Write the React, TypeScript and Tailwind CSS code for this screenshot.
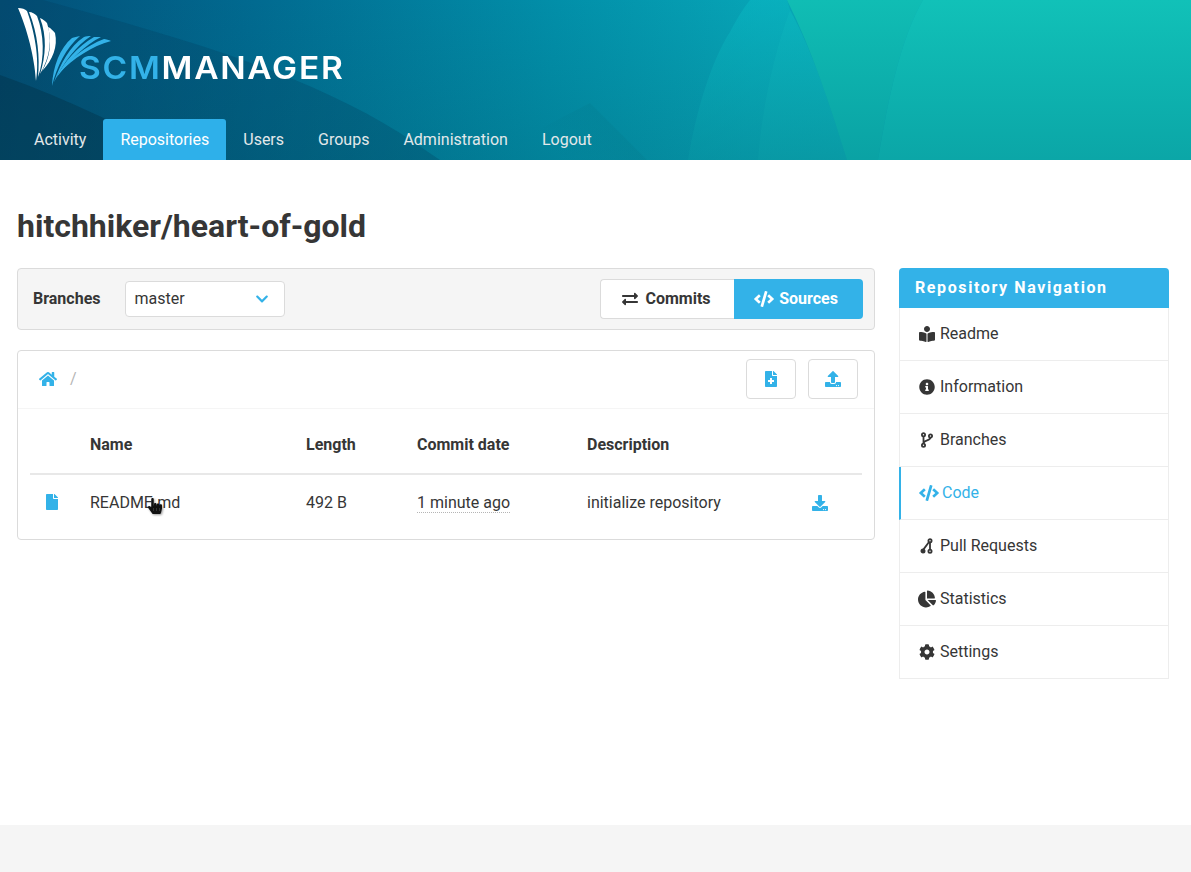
import { ReactNode } from "react";
import {
  FaBookReader,
  FaChartPie,
  FaChevronDown,
  FaCode,
  FaCog,
  FaDownload,
  FaExchangeAlt,
  FaFile,
  FaFileMedical,
  FaHandPointer,
  FaHome,
  FaInfoCircle,
  FaUpload,
} from "react-icons/fa";

function HeaderArt() {
  return (
    <svg className="absolute inset-0 h-full w-full" viewBox="0 0 1191 160" preserveAspectRatio="none">
      <defs>
        <linearGradient id="hero" x1="0" y1="0" x2="1000" y2="130" gradientUnits="userSpaceOnUse">
          <stop offset="0" stopColor="#034f78" />
          <stop offset="0.25" stopColor="#016a90" />
          <stop offset="0.55" stopColor="#028fa9" />
          <stop offset="0.75" stopColor="#07a4b6" />
          <stop offset="1" stopColor="#0ab4b4" />
        </linearGradient>
        <linearGradient id="shade" x1="0" y1="0" x2="0" y2="160" gradientUnits="userSpaceOnUse">
          <stop offset="0" stopColor="#03505f" stopOpacity="0" />
          <stop offset="1" stopColor="#03505f" stopOpacity="0.22" />
        </linearGradient>
        <linearGradient id="corner" x1="618" y1="131" x2="576" y2="173" gradientUnits="userSpaceOnUse">
          <stop offset="0" stopColor="#04606f" stopOpacity="0.1" />
          <stop offset="1" stopColor="#04606f" stopOpacity="0" />
        </linearGradient>
        <linearGradient id="archA" x1="0" y1="0" x2="0" y2="160" gradientUnits="userSpaceOnUse">
          <stop offset="0" stopColor="#0abcc6" />
          <stop offset="1" stopColor="#0898a4" />
        </linearGradient>
        <linearGradient id="archB" x1="0" y1="0" x2="0" y2="160" gradientUnits="userSpaceOnUse">
          <stop offset="0" stopColor="#0cbcc4" />
          <stop offset="1" stopColor="#0a9ca6" />
        </linearGradient>
        <linearGradient id="archC" x1="0" y1="0" x2="0" y2="160" gradientUnits="userSpaceOnUse">
          <stop offset="0" stopColor="#10bdb4" />
          <stop offset="1" stopColor="#0aa2a4" />
        </linearGradient>
        <linearGradient id="archD" x1="0" y1="0" x2="0" y2="160" gradientUnits="userSpaceOnUse">
          <stop offset="0" stopColor="#11c1b8" />
          <stop offset="1" stopColor="#0ba6a7" />
        </linearGradient>
      </defs>
      <rect width="1191" height="160" fill="url(#hero)" />
      <path d="M43 0C170 35 300 70 400 133L440 160H0V0Z" fill="#03405f" opacity="0.3" />
      <path d="M0 75C70 100 130 130 190 160H0Z" fill="#032f48" opacity="0.45" />
      <path d="M590 103L647 160H480Z" fill="url(#corner)" />
      <rect width="1191" height="160" fill="url(#shade)" />
      <path d="M688 160C698 100 715 55 730 32C735 22 742 10 750 0H787L790 10C775 50 762 105 758 160Z" fill="url(#archA)" opacity="0.45" />
      <path d="M758 160C762 105 775 50 790 10C812 50 830 105 847 160Z" fill="url(#archB)" opacity="0.65" />
      <path d="M787 0H923C900 40 888 100 878 160H847C830 105 812 50 787 0Z" fill="url(#archC)" />
      <path d="M878 160C888 100 900 40 923 0H1191V160Z" fill="url(#archD)" />
    </svg>
  );
}

function Logo() {
  return (
    <div className="relative z-10 ml-[-17px] flex h-[119px] items-start">
      <svg width="112" height="90" viewBox="0 0 112 90" className="mt-[6px] shrink-0">
        <g transform="translate(0,-6)" fill="#ffffff">
          <path d="M18 8C22 8 25 9 27 11C34 30 40 58 36 81C35 64 30 36 18 8Z" />
          <path d="M29 12C32 12 35 14 37 16C44 34 45 58 38 77C40 58 38 34 29 12Z" />
          <path d="M40 18C43 19 45 21 47 23C52 38 51 56 40 74C46 56 47 36 40 18Z" />
          <path d="M48 27C51 28 53 31 55 33C58 46 53 60 42 71C50 58 52 42 48 27Z" />
        </g>
        <g transform="translate(0,-6)" fill="#33b2e8">
          <path d="M52 86C53 66 60 48 72 38C74 37 77 37 80 36C66 48 57 66 52 86Z" />
          <path d="M54 82C60 64 70 46 84 37C86 36 88 36 91 36C76 46 64 62 54 82Z" />
          <path d="M56 78C64 62 78 46 94 37C96 37 99 37 101 37C85 45 70 60 56 78Z" />
          <path d="M58 74C70 58 86 46 104 39C106 39 109 40 111 41C92 46 74 58 58 74Z" />
        </g>
      </svg>
      <div className="mt-[50px] ml-[-33px] origin-left scale-x-[1.08] font-['Inter',sans-serif] text-[31px] leading-[36px] font-semibold tracking-[1.6px] whitespace-nowrap">
        <span className="text-[#33b2e8]">SCM</span>
        <span className="text-white">MANAGER</span>
      </div>
    </div>
  );
}

const topLinks = ["Activity", "Repositories", "Users", "Groups", "Administration", "Logout"];

const sideLinks: { label: string; icon: ReactNode; active?: boolean }[] = [
  { label: "Readme", icon: <FaBookReader size={16} /> },
  { label: "Information", icon: <FaInfoCircle size={16} /> },
  { label: "Branches", icon: <BranchIcon /> },
  { label: "Code", icon: <FaCode size={20} className="shrink-0" />, active: true },
  { label: "Pull Requests", icon: <PullIcon /> },
  { label: "Statistics", icon: <FaChartPie size={18} className="shrink-0" /> },
  { label: "Settings", icon: <FaCog size={16} /> },
];

function BranchIcon() {
  return (
    <svg width="16" height="16" viewBox="0 0 16 16" fill="none" stroke="currentColor" strokeWidth="1.8">
      <circle cx="4.5" cy="2.8" r="1.6" />
      <circle cx="4.5" cy="13.2" r="1.6" />
      <circle cx="11.5" cy="4" r="1.6" />
      <path d="M4.5 4.4V11.6M11.5 5.6C11.5 9 5 7.5 4.5 11" />
    </svg>
  );
}

function PullIcon() {
  return (
    <svg width="16" height="16" viewBox="0 0 16 16" fill="none" stroke="currentColor" strokeWidth="1.8">
      <circle cx="11" cy="2.8" r="1.6" />
      <circle cx="11" cy="13.2" r="1.6" />
      <circle cx="4" cy="13" r="1.6" fill="currentColor" />
      <path d="M11 4.4V11.6M10 4L4.5 11.4" />
    </svg>
  );
}

export default function App() {
  return (
    <div className="flex min-h-screen flex-col bg-white font-['Roboto',sans-serif] text-[16px] text-[#363636]">
      <header className="relative h-[160px] overflow-hidden pl-[17px]">
        <HeaderArt />
        <Logo />
        <nav className="relative z-10 flex h-[41px]">
          {topLinks.map(link => (
            <a
              key={link}
              className={`flex items-center rounded-t-[3px] px-[17px] ${
                link === "Repositories" ? "bg-[#2eb0ea] text-white" : "text-[#e2e8ea]"
              }`}
            >
              {link}
            </a>
          ))}
        </nav>
      </header>

      <main className="flex-1 px-[17px] pt-[47px]">
        <h1 className="text-[32px] leading-[38px] font-bold text-[#363636]">hitchhiker/heart-of-gold</h1>
        <div className="mt-[23px] mr-[5px] flex gap-[24px]">
          <div className="w-[858px]">
            <div className="flex h-[62px] items-center rounded-[4px] border border-[#dbdbdb] bg-[#f5f5f5] pr-[11px] pl-[15px]">
              <span className="font-bold">Branches</span>
              <div className="ml-[24px] flex h-[36px] w-[160px] items-center justify-between rounded-[4px] border border-[#dbdbdb] bg-white pr-[15px] pl-[9px]">
                <span>master</span>
                <FaChevronDown size={14} className="text-[#33b2e8]" />
              </div>
              <div className="ml-auto flex h-[40px] font-bold">
                <div className="flex w-[134px] items-center justify-center gap-[7px] rounded-l-[4px] border border-r-0 border-[#dbdbdb] bg-white pr-[2px]">
                  <FaExchangeAlt size={16} />
                  Commits
                </div>
                <div className="flex w-[129px] items-center justify-center gap-[5px] rounded-r-[4px] bg-[#33b2e8] pr-[5px] text-white">
                  <FaCode size={20} />
                  Sources
                </div>
              </div>
            </div>

            <div className="mt-[20px] rounded-[4px] border border-[#dbdbdb] pb-[8px]">
              <div className="flex h-[58px] items-center border-b border-[#f5f5f5] pr-[16px] pb-[1px] pl-[21px]">
                <FaHome size={18} className="text-[#33b2e8]" />
                <span className="ml-[13px] text-[#b5b5b5]">/</span>
                <div className="ml-auto flex gap-[12px]">
                  <div className="flex h-[40px] w-[50px] items-center justify-center rounded-[4px] border border-[#dbdbdb]">
                    <FaFileMedical size={16} className="text-[#33b2e8]" />
                  </div>
                  <div className="flex h-[40px] w-[50px] items-center justify-center rounded-[4px] border border-[#dbdbdb]">
                    <FaUpload size={16} className="text-[#33b2e8]" />
                  </div>
                </div>
              </div>
              <div className="px-[12px]">
                <table className="w-full table-fixed">
                  <thead>
                    <tr className="h-[65px] border-b-2 border-[#e8e8e8] text-left">
                      <th className="w-[60px]" />
                      <th className="w-[216px] pt-[8px] font-bold">Name</th>
                      <th className="w-[111px] pt-[8px] font-bold">Length</th>
                      <th className="w-[170px] pt-[8px] font-bold">Commit date</th>
                      <th className="w-[225px] pt-[8px] font-bold">Description</th>
                      <th />
                    </tr>
                  </thead>
                  <tbody>
                    <tr className="h-[57px]">
                      <td className="pb-[2px] pl-[14px]">
                        <FaFile size={16} className="text-[#33b2e8]" />
                      </td>
                      <td>
                        <span className="relative">
                          README.md
                          <FaHandPointer size={16} className="absolute top-[5px] left-[57px] text-[#111] drop-shadow-[1px_1px_1px_rgba(0,0,0,0.4)]" />
                        </span>
                      </td>
                      <td>492 B</td>
                      <td>
                        <span className="border-b border-dotted border-[#b5b5b5]">1 minute ago</span>
                      </td>
                      <td>initialize repository</td>
                      <td className="pb-[1px]">
                        <FaDownload size={16} className="text-[#33b2e8]" />
                      </td>
                    </tr>
                  </tbody>
                </table>
              </div>
            </div>
          </div>

          <aside className="w-[270px]">
            <div className="flex h-[40px] items-center rounded-t-[4px] bg-[#33b2e8] pl-[16px] text-[16px] font-bold tracking-[1.6px] text-white">
              Repository Navigation
            </div>
            <ul className="border-x border-[#ededed]">
              {sideLinks.map(item => (
                <li
                  key={item.label}
                  className={`flex h-[53px] items-center gap-[5px] border-b border-[#ededed] pl-[18px] ${
                    item.active ? "ml-[-1px] border-l-2 border-l-[#33b2e8] text-[#33b2e8]" : ""
                  }`}
                >
                  <span className={`flex justify-center ${item.active ? "w-[20px]" : "w-[17px]"}`}>{item.icon}</span>
                  <span className={item.active ? "ml-[-2px]" : ""}>{item.label}</span>
                </li>
              ))}
            </ul>
          </aside>
        </div>
      </main>

      <footer className="h-[47px] bg-[#f5f5f5]" />
    </div>
  );
}
